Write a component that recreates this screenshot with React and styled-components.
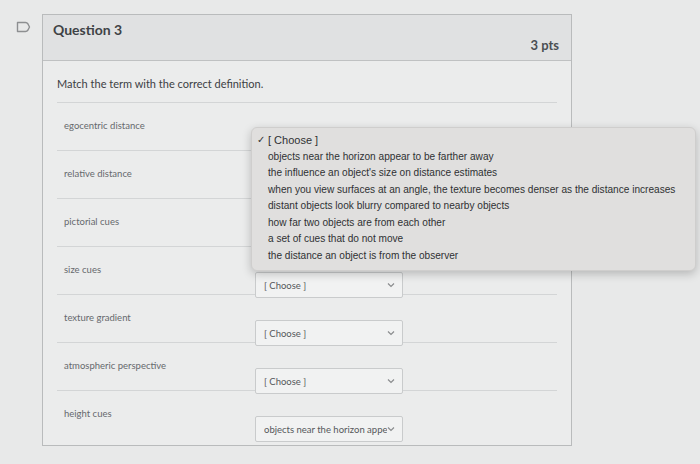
import React from 'react';
import styled, { createGlobalStyle } from 'styled-components';

const GlobalStyle = createGlobalStyle`
	html, body {
		margin: 0;
		padding: 0;
		background: #e8e9e9;
		font-family: Lato, "Open Sans", sans-serif;
	}
`;

const terms = [
	{ term: 'egocentric distance', value: '[ Choose ]', open: true },
	{ term: 'relative distance', value: '[ Choose ]', covered: true },
	{ term: 'pictorial cues', value: '[ Choose ]', covered: true },
	{ term: 'size cues', value: '[ Choose ]' },
	{ term: 'texture gradient', value: '[ Choose ]' },
	{ term: 'atmospheric perspective', value: '[ Choose ]' },
	{ term: 'height cues', value: 'objects near the horizon appe' },
];

const options = [
	'objects near the horizon appear to be farther away',
	"the influence an object's size on distance estimates",
	'when you view surfaces at an angle, the texture becomes denser as the distance increases',
	'distant objects look blurry compared to nearby objects',
	'how far two objects are from each other',
	'a set of cues that do not move',
	'the distance an object is from the observer',
];

const FlagIcon = () => (
	<svg width="15" height="12" viewBox="0 0 15 12" fill="none">
		<path
			d="M1.5 1.5 H9.5 Q11 1.5 12 3 L13.5 6 L12 9 Q11 10.5 9.5 10.5 H1.5 Z"
			stroke="#8d8f91"
			strokeWidth="1.4"
			strokeLinejoin="round"
		/>
	</svg>
);

const Chevron = () => (
	<svg width="8" height="6" viewBox="0 0 8 6" fill="none">
		<path d="M1 1.5 L4 4.5 L7 1.5" stroke="#8a8c8e" strokeWidth="1.2" />
	</svg>
);

// selects under the open menu keep their box, the text is hidden behind the menu anyway
const Dropdown = ({ value, covered }) => (
	<SelectBox>
		<SelectText $covered={covered}>{value}</SelectText>
		<Chevron />
	</SelectBox>
);

const Menu = () => (
	<MenuPanel>
		<MenuItem $selected>
			<Check>✓</Check>[ Choose ]
		</MenuItem>
		{options.map((o) => (
			<MenuItem key={o}>{o}</MenuItem>
		))}
	</MenuPanel>
);

const App = () => {
	return (
		<>
			<GlobalStyle />
			<Page>
				<IconCol>
					<FlagIcon />
				</IconCol>
				<Card>
					<Header>
						<Title>Question 3</Title>
						<Points>3 pts</Points>
					</Header>
					<Body>
						<Prompt>Match the term with the correct definition.</Prompt>
						{terms.map((t) => (
							<Row key={t.term}>
								<Term>{t.term}</Term>
								<SelectCell>
									<Dropdown value={t.value} covered={t.open || t.covered} />
									{t.open && <Menu />}
								</SelectCell>
							</Row>
						))}
					</Body>
				</Card>
			</Page>
		</>
	);
};

export default App;

const Page = styled.div`
	display: flex;
	align-items: flex-start;
	padding: 14px 0 0 16px;
	width: 700px;
	height: 464px;
	box-sizing: border-box;
	overflow: hidden;
`;

const IconCol = styled.div`
	width: 26px;
	padding-top: 3px;
`;

const Card = styled.div`
	width: 530px;
	border: 1px solid #b9bbbc;
	background: #ebecec;
	box-sizing: border-box;
`;

const Header = styled.div`
	display: flex;
	align-items: center;
	justify-content: space-between;
	height: 45px;
	padding: 0 12px 0 10px;
	background: #e0e1e2;
	border-bottom: 1px solid #bfc1c2;
`;

const Title = styled.h2`
	margin: -16px 0 0 0;
	font-size: 14px;
	font-weight: 700;
	color: #3f4346;
`;

const Points = styled.span`
	font-size: 13px;
	font-weight: 700;
	color: #4b4f53;
	margin-top: 14px;
`;

const Body = styled.div`
	padding: 16px 14px 6px 14px;
`;

const Prompt = styled.p`
	margin: 0;
	padding-bottom: 12px;
	font-size: 11px;
	color: #3c4043;
	border-bottom: 1px solid #d3d5d6;
`;

const Row = styled.div`
	position: relative;
	display: flex;
	align-items: flex-start;
	height: 48px;
	box-sizing: border-box;
	border-bottom: 1px solid #d3d5d6;

	&:last-child {
		border-bottom: none;
	}
`;

const Term = styled.div`
	width: 198px;
	padding: 17px 0 0 7px;
	box-sizing: border-box;
	font-size: 9.5px;
	color: #66696c;
`;

const SelectCell = styled.div`
	position: relative;
	padding-top: 25px;
`;

const SelectBox = styled.div`
	display: flex;
	align-items: center;
	justify-content: space-between;
	width: 148px;
	height: 26px;
	padding: 0 7px 0 8px;
	box-sizing: border-box;
	background: #f1f2f2;
	border: 1px solid #c9cbcc;
	border-radius: 2px;
`;

const SelectText = styled.span`
	font-size: 9.5px;
	color: #55585b;
	white-space: nowrap;
	overflow: hidden;
	visibility: ${(p) => (p.$covered ? 'hidden' : 'visible')};
`;

const MenuPanel = styled.div`
	position: absolute;
	top: 24px;
	left: -4px;
	z-index: 2;
	width: 443px;
	padding: 4px 0 6px;
	background: #e0dfde;
	border: 1px solid #cfcecd;
	border-radius: 6px;
	box-shadow: 0 3px 10px rgba(0, 0, 0, 0.22);
`;

const MenuItem = styled.div`
	position: relative;
	height: 16.5px;
	line-height: 16.5px;
	padding-left: 16px;
	font-family: "Liberation Sans", Arial, sans-serif;
	font-size: ${(p) => (p.$selected ? '11px' : '10.1px')};
	color: #2f3133;
	white-space: nowrap;
`;

const Check = styled.span`
	position: absolute;
	left: 5px;
	font-size: 10px;
	color: #333;
`;
